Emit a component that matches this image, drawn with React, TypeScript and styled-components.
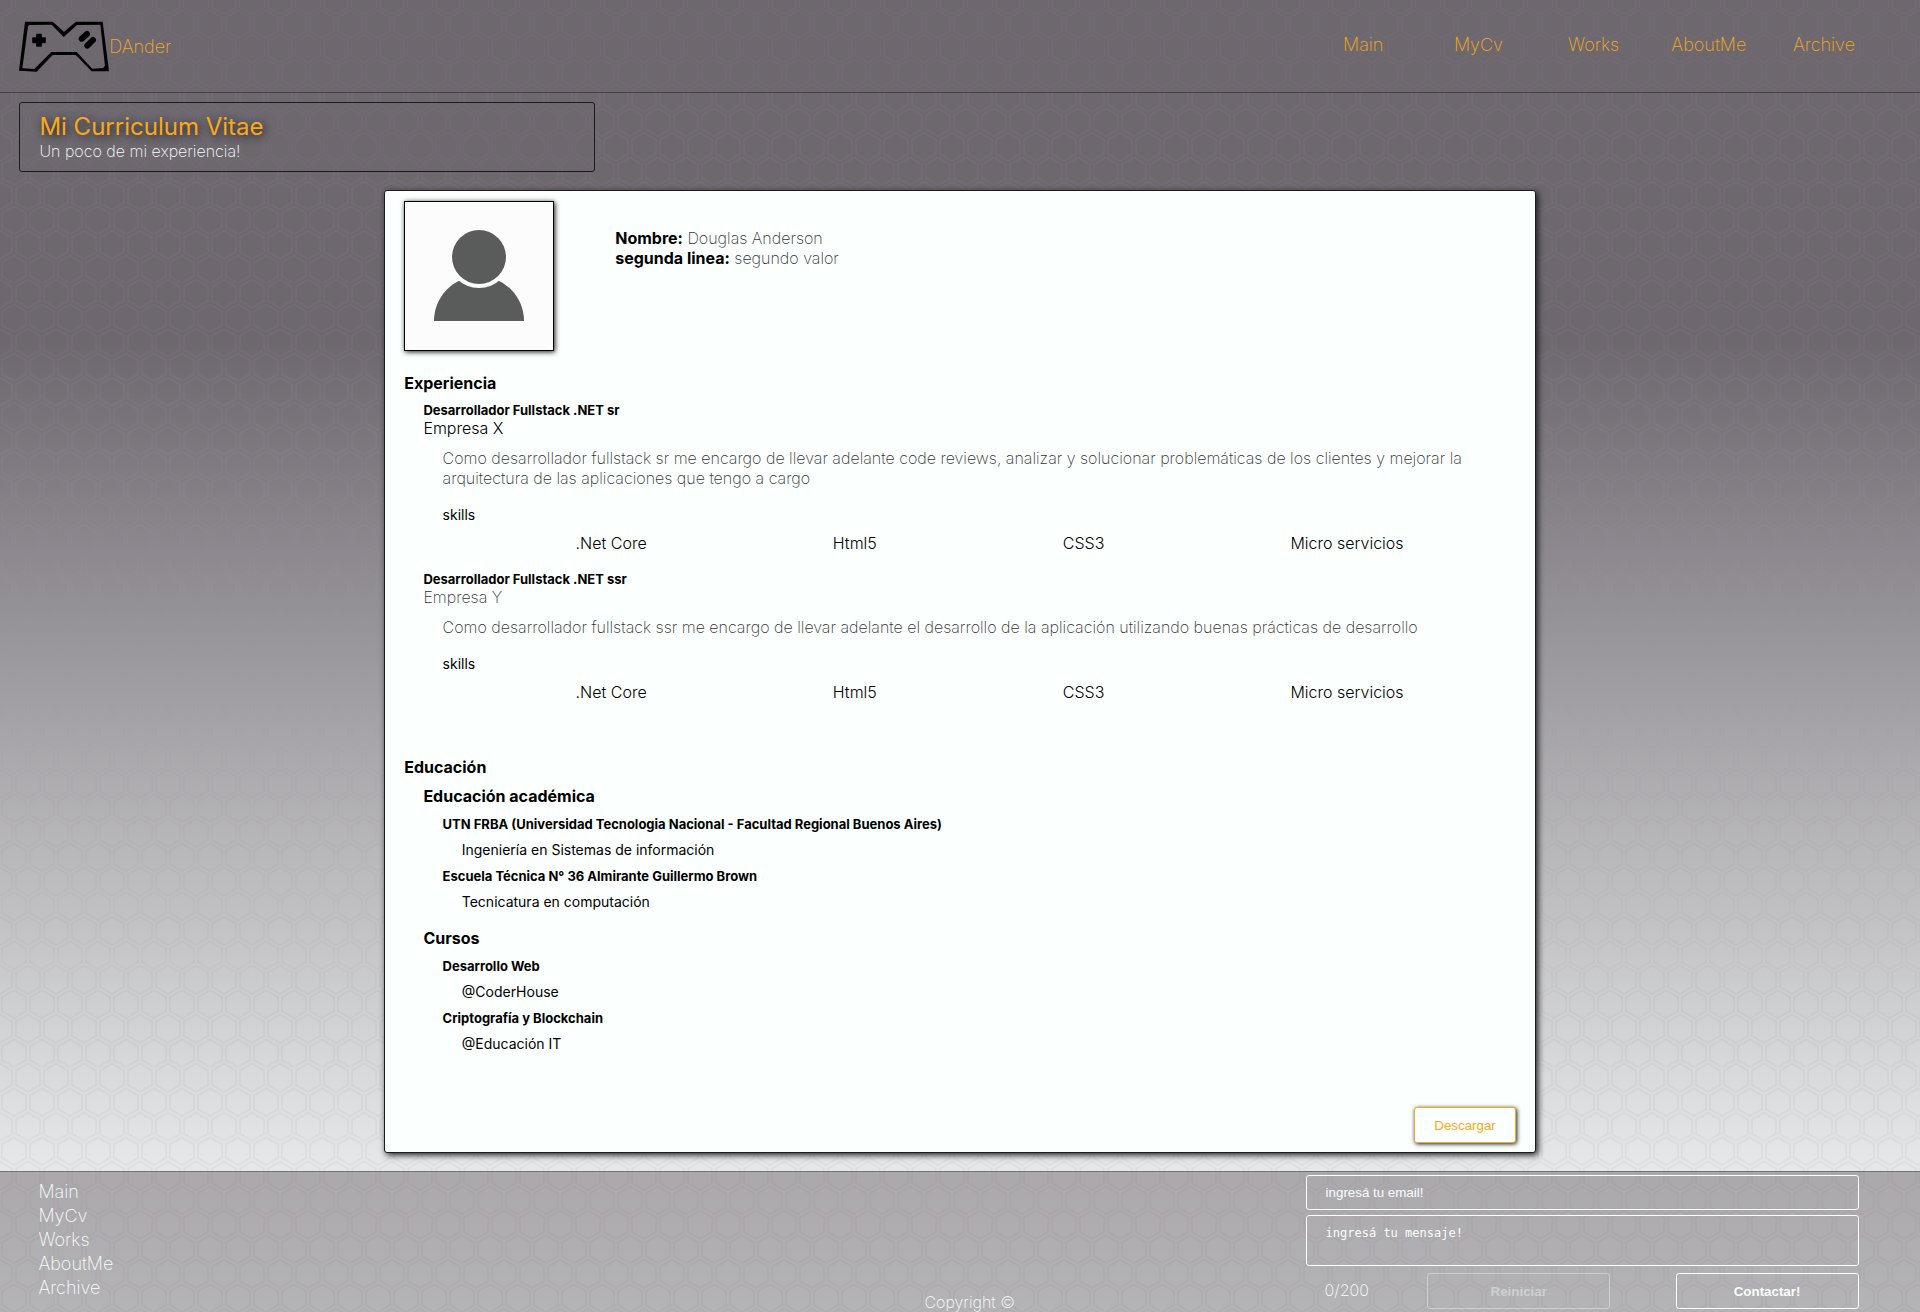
import React, { useState } from "react";
import styled, { createGlobalStyle, css } from "styled-components";

const colors = {
  ink: "#1b1b1e",
  paper: "#fbfffe",
  smoke: "#6d676e",
  veil: "rgba(109, 103, 110, 0.5)",
  accent: "#faa916",
};

const hexagons =
  "M13.99 9.25l13 7.5v15l-13 7.5L1 31.75v-15l12.99-7.5zM3 17.9v12.7l10.99 6.34 11-6.35V17.9l-11-6.34L3 17.9zM0 15l12.98-7.5V0h-2v6.35L0 12.69v2.3zm0 18.5L12.98 41v8h-2v-6.85L0 35.81v-2.3zM15 0v7.5L27.99 15H28v-2.31h-.01L17 6.35V0h-2zm0 49v-8l12.99-7.5H28v2.31h-.01L17 42.15V49h-2z";

const pattern = `url("data:image/svg+xml,%3Csvg xmlns='http://www.w3.org/2000/svg' width='28' height='49' viewBox='0 0 28 49'%3E%3Cpath fill='%239C92AC' fill-opacity='0.1' fill-rule='evenodd' d='${hexagons}'/%3E%3C/svg%3E")`;

const GlobalStyle = createGlobalStyle`
  *, *::before, *::after { box-sizing: border-box; }
  body, h1, h2, h3, h4, h5, p, ul { margin: 0; }
  ul { padding: 0; list-style: none; }
  body {
    font-family: Inter, "Liberation Sans", sans-serif;
    font-size: 16px;
    font-weight: 200;
    line-height: 20px;
    color: #000;
  }
`;

const Page = styled.div`
  min-height: 100vh;
  display: flex;
  flex-direction: column;
  background-image: ${pattern}, linear-gradient(${colors.smoke} 26%, ${colors.paper});
`;

const Header = styled.header`
  display: flex;
  justify-content: space-between;
  align-items: flex-start;
  padding: 21px 2% 19px 1%;
  background: ${colors.veil};
  border-bottom: 1px solid rgba(27, 27, 30, 0.5);
`;

const Brand = styled.a`
  display: flex;
  align-items: center;
  color: ${colors.accent};
  font-size: 18px;
  text-decoration: none;
`;

const Logo = styled.svg`
  width: 90px;
  height: 52px;
`;

const NavList = styled.ul`
  display: flex;
  width: 30vw;
  padding-top: 14px;
  font-size: 18px;

  li {
    flex: 1;
    text-align: center;
  }
`;

const NavLink = styled.a<{ $tone: string }>`
  color: ${(p) => p.$tone};
  text-decoration: none;
`;

const Main = styled.main`
  flex: 1;
  display: flex;
  flex-direction: column;
  padding: 9px 0 18px;
`;

const Hero = styled.section`
  width: 30%;
  margin-left: 1%;
  padding: 10px 1vw;
  border: 1px solid ${colors.ink};
  border-radius: 3px;
  background: ${colors.veil};
  color: ${colors.paper};
`;

const HeroTitle = styled.h1`
  font-size: 24px;
  font-weight: 400;
  line-height: 28px;
  color: ${colors.accent};
  text-shadow: 2px 2px 8px ${colors.ink};
`;

const Card = styled.article`
  width: 60%;
  margin: 18px auto 0;
  padding: 10px 1vw 9px;
  background: ${colors.paper};
  border: 1px solid ${colors.ink};
  border-radius: 3px;
  box-shadow: 2px 2px 6px ${colors.ink};
`;

const Profile = styled.div`
  display: flex;
  gap: 61px;
`;

const Avatar = styled.svg`
  width: 150px;
  height: 150px;
  background: #fcfcfc;
  border: 1px solid #000;
  box-shadow: 1px 1px 5px ${colors.ink};
`;

const Facts = styled.div`
  padding-top: 27px;
  color: #333;

  strong {
    font-weight: 700;
    color: #000;
  }
`;

const Section = styled.section<{ $gap: number }>`
  margin-top: ${(p) => p.$gap}px;
`;

const Nested = styled.div<{ $gap: number }>`
  margin: ${(p) => p.$gap}px 0 0 1vw;
`;

const Heading = styled.h3`
  font-size: 16px;
  font-weight: 700;
`;

const Subheading = styled.h4`
  font-size: 13px;
  font-weight: 700;
  line-height: 16px;
`;

const Company = styled.p<{ $strong?: boolean }>`
  color: #333;
  ${(p) =>
    p.$strong &&
    css`
      color: #000;
      font-weight: 300;
    `}
`;

const Description = styled.p`
  color: #333;
`;

const SmallText = styled.p`
  font-size: 14px;
  font-weight: 400;
  line-height: 16px;
`;

const Skills = styled.div`
  margin-top: 19px;
`;

const SkillList = styled.ul`
  display: flex;
  justify-content: space-around;
  margin: 10px 1vw 0 0;
  padding-left: 40px;
  font-weight: 300;
`;

const CardActions = styled.div`
  display: flex;
  justify-content: flex-end;
  margin-top: 55px;
`;

const outlined = css`
  height: 36px;
  padding: 0 19px;
  border: 1px solid currentColor;
  border-radius: 3px;
  background: transparent;
  font-family: "Liberation Sans", Arial, sans-serif;
`;

const DownloadButton = styled.button`
  ${outlined}
  color: ${colors.accent};
  box-shadow: 1px 1px 4px ${colors.ink};
  background: ${colors.paper};
`;

const Footer = styled.footer`
  display: grid;
  grid-template-columns: 33% 35% 32%;
  background: ${colors.veil};
  border-top: 1px solid rgba(27, 27, 30, 0.4);
  color: ${colors.paper};
`;

const FooterLinks = styled.ul`
  padding: 8px 0 0 2vw;
  font-size: 18px;
  line-height: 24px;
`;

const Copyright = styled.p`
  align-self: end;
  text-align: center;
`;

const ContactForm = styled.form`
  display: grid;
  grid-template-columns: 22% 1fr;
  gap: 5px 0;
  align-items: center;
  padding: 3px 10% 3px 0;
`;

const field = css`
  ${outlined}
  grid-column: 1 / -1;
  width: 100%;
  color: ${colors.paper};

  &::placeholder {
    color: ${colors.paper};
    opacity: 1;
  }
`;

const EmailField = styled.input`
  ${field}
  height: 35px;
`;

const MessageField = styled.textarea`
  ${field}
  display: block;
  height: 51px;
  padding: 10px 19px;
  resize: none;
  font-family: "DejaVu Sans Mono", "Liberation Mono", monospace;
  font-size: 12px;
`;

const Counter = styled.output`
  padding-left: 19px;
`;

const FormButtons = styled.div`
  display: flex;
  justify-content: space-between;
  padding-top: 2px;
`;

const FormButton = styled.button`
  ${outlined}
  width: 183px;
  color: ${colors.paper};
  font-weight: 700;

  &:disabled {
    opacity: 0.4;
  }
`;

const pages = ["Main", "MyCv", "Works", "AboutMe", "Archive"];
const skills = [".Net Core", "Html5", "CSS3", "Micro servicios"];

const jobs = [
  {
    role: "Desarrollador Fullstack .NET sr",
    company: "Empresa X",
    current: true,
    text: "Como desarrollador fullstack sr me encargo de llevar adelante code reviews, analizar y solucionar problemáticas de los clientes y mejorar la arquitectura de las aplicaciones que tengo a cargo",
  },
  {
    role: "Desarrollador Fullstack .NET ssr",
    company: "Empresa Y",
    current: false,
    text: "Como desarrollador fullstack ssr me encargo de llevar adelante el desarrollo de la aplicación utilizando buenas prácticas de desarrollo",
  },
];

const studies = [
  {
    title: "Educación académica",
    items: [
      ["UTN FRBA (Universidad Tecnologia Nacional - Facultad Regional Buenos Aires)", "Ingeniería en Sistemas de información"],
      ["Escuela Técnica N° 36 Almirante Guillermo Brown", "Tecnicatura en computación"],
    ],
  },
  {
    title: "Cursos",
    items: [
      ["Desarrollo Web", "@CoderHouse"],
      ["Criptografía y Blockchain", "@Educación IT"],
    ],
  },
];

function GamepadLogo() {
  return (
    <Logo viewBox="57 64 270 156" aria-hidden="true">
      <path
        fillRule="evenodd"
        d="M75 66H158L192 96L228 66H308L327 215H275L227 166H158L110 216L57 213ZM84 80L67 206L103 208L154 157H230L277 207L309 205L315 198L301 75L231 76L191 112L155 75L88 76Z"
      />
      <path
        d="M111 105h12v10h12v13h-12v11h-12v-11H99v-13h12z"
        stroke="#000"
        strokeWidth="5"
        strokeLinejoin="round"
      />
      <path d="M245 117L261 103M262 138L279 121" stroke="#000" strokeWidth="18" strokeLinecap="round" />
    </Logo>
  );
}

function Portrait() {
  return (
    <Avatar viewBox="0 0 148 148" role="img" aria-label="Douglas Anderson">
      <path d="M29 119a45 45 0 0 1 90 0z" fill="#5a5c5b" />
      <circle cx="74" cy="55" r="31" fill="#fcfcfc" />
      <circle cx="74" cy="55" r="27" fill="#5a5c5b" />
    </Avatar>
  );
}

export default function App() {
  const [message, setMessage] = useState("");
  const [email, setEmail] = useState("");
  const empty = !message && !email;

  return (
    <>
      <GlobalStyle />
      <Page>
        <Header>
          <Brand href="#main">
            <GamepadLogo />
            DAnder
          </Brand>
          <nav>
            <NavList>
              {pages.map((name) => (
                <li key={name}>
                  <NavLink $tone={colors.accent} href={`#${name}`}>
                    {name}
                  </NavLink>
                </li>
              ))}
            </NavList>
          </nav>
        </Header>

        <Main>
          <Hero>
            <HeroTitle>Mi Curriculum Vitae</HeroTitle>
            <p>Un poco de mi experiencia!</p>
          </Hero>

          <Card>
            <Profile>
              <Portrait />
              <Facts>
                <p>
                  <strong>Nombre:</strong> Douglas Anderson
                </p>
                <p>
                  <strong>segunda linea:</strong> segundo valor
                </p>
              </Facts>
            </Profile>

            <Section $gap={22}>
              <Heading>Experiencia</Heading>
              {jobs.map((job, i) => (
                <Nested key={job.role} $gap={i ? 18 : 9}>
                  <Subheading>{job.role}</Subheading>
                  <Company $strong={job.current}>{job.company}</Company>
                  <Nested $gap={10}>
                    <Description>{job.text}</Description>
                    <Skills>
                      <SmallText>skills</SmallText>
                      <SkillList>
                        {skills.map((skill) => (
                          <li key={skill}>{skill}</li>
                        ))}
                      </SkillList>
                    </Skills>
                  </Nested>
                </Nested>
              ))}
            </Section>

            <Section $gap={55}>
              <Heading>Educación</Heading>
              {studies.map((group, i) => (
                <Nested key={group.title} $gap={i ? 18 : 9}>
                  <Heading>{group.title}</Heading>
                  {group.items.map(([place, detail]) => (
                    <Nested key={place} $gap={10}>
                      <Subheading>{place}</Subheading>
                      <Nested $gap={10}>
                        <SmallText>{detail}</SmallText>
                      </Nested>
                    </Nested>
                  ))}
                </Nested>
              ))}
            </Section>

            <CardActions>
              <DownloadButton type="button">Descargar</DownloadButton>
            </CardActions>
          </Card>
        </Main>

        <Footer>
          <FooterLinks>
            {pages.map((name) => (
              <li key={name}>
                <NavLink $tone={colors.paper} href={`#${name}`}>
                  {name}
                </NavLink>
              </li>
            ))}
          </FooterLinks>
          <Copyright>Copyright ©</Copyright>
          <ContactForm onSubmit={(e) => e.preventDefault()}>
            <EmailField
              type="email"
              aria-label="Email"
              placeholder="ingresá tu email!"
              value={email}
              onChange={(e) => setEmail(e.target.value)}
            />
            <MessageField
              aria-label="Mensaje"
              placeholder="ingresá tu mensaje!"
              maxLength={200}
              value={message}
              onChange={(e) => setMessage(e.target.value)}
            />
            <Counter>{message.length}/200</Counter>
            <FormButtons>
              <FormButton
                type="button"
                disabled={empty}
                onClick={() => {
                  setEmail("");
                  setMessage("");
                }}
              >
                Reiniciar
              </FormButton>
              <FormButton type="submit">Contactar!</FormButton>
            </FormButtons>
          </ContactForm>
        </Footer>
      </Page>
    </>
  );
}
